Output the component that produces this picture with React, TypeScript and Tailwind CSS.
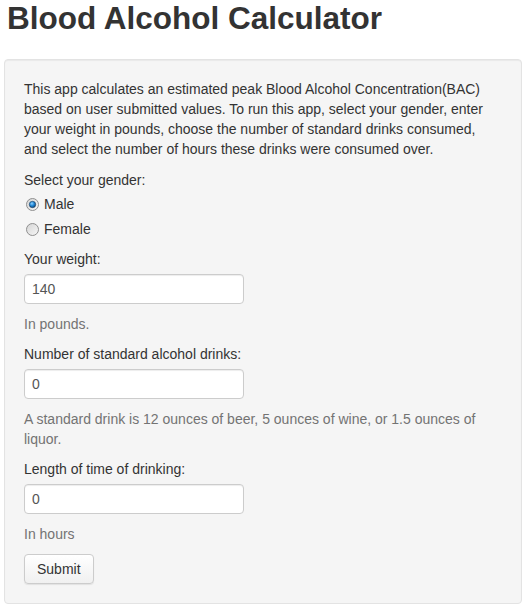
import { useState } from "react";

function Radio({ checked }: { checked: boolean }) {
  return (
    <svg width="13" height="13" viewBox="0 0 13 13" className="shrink-0">
      <defs>
        <linearGradient id={checked ? "rg-on" : "rg-off"} x1="0" y1="0" x2="1" y2="1">
          <stop offset="0" stopColor="#d4d4d4" />
          <stop offset="1" stopColor="#f7f7f7" />
        </linearGradient>
        <radialGradient id="dot" cx="0.4" cy="0.35" r="0.7">
          <stop offset="0" stopColor="#8fd1ff" />
          <stop offset="0.5" stopColor="#1e86d6" />
          <stop offset="1" stopColor="#0b3f73" />
        </radialGradient>
      </defs>
      <circle cx="6.5" cy="6.5" r="6" fill={`url(#${checked ? "rg-on" : "rg-off"})`} stroke="#8f8f8f" strokeWidth="1" />
      {checked && <circle cx="6.5" cy="6.5" r="3.2" fill="url(#dot)" stroke="#1d3c5c" strokeWidth="0.6" />}
    </svg>
  );
}

function NumberInput({ value }: { value: string }) {
  return (
    <input
      type="text"
      defaultValue={value}
      className="mt-[5px] block h-[30px] w-[220px] rounded-[4px] border border-[#cccccc] bg-white px-[7px] text-[14px] text-[#555555] shadow-[inset_0_1px_1px_rgba(0,0,0,0.075)] outline-none"
    />
  );
}

export default function App() {
  const [gender, setGender] = useState("male");

  return (
    <div className="min-h-screen bg-white text-[14px] leading-[20px] text-[#333333] font-['Liberation_Sans',Arial,sans-serif]">
      <div className="px-[4px]">
        <h1 className="pl-[3px] pt-[1px] text-[31.5px] font-bold leading-[34px] text-[#333333]">Blood Alcohol Calculator</h1>

        <div className="mt-[24px] w-[518px] rounded-[4px] border border-[#e3e3e3] bg-[#f5f5f5] p-[19px] shadow-[inset_0_1px_1px_rgba(0,0,0,0.05)]">
          <p className="mb-[11px] whitespace-nowrap">
            This app calculates an estimated peak Blood Alcohol Concentration(BAC)
            <br />
            based on user submitted values. To run this app, select your gender, enter
            <br />
            your weight in pounds, choose the number of standard drinks consumed,
            <br />
            and select the number of hours these drinks were consumed over.
          </p>

          <div>Select your gender:</div>
          <div className="mt-[4px] flex flex-col gap-[5px]">
            {[
              ["male", "Male"],
              ["female", "Female"],
            ].map(([key, label]) => (
              <label key={key} className="flex cursor-pointer items-center gap-[5px] pl-[2px]" onClick={() => setGender(key)}>
                <Radio checked={gender === key} />
                <span>{label}</span>
              </label>
            ))}
          </div>

          <div className="mt-[10px]">Your weight:</div>
          <NumberInput value="140" />
          <div className="mt-[10px] text-[#737373]">In pounds.</div>

          <div className="mt-[10px]">Number of standard alcohol drinks:</div>
          <NumberInput value="0" />
          <div className="mt-[10px] text-[#737373]">
            A standard drink is 12 ounces of beer, 5 ounces of wine, or 1.5 ounces of
            <br />
            liquor.
          </div>

          <div className="mt-[10px]">Length of time of drinking:</div>
          <NumberInput value="0" />
          <div className="mt-[10px] text-[#737373]">In hours</div>

          <button className="mt-[10px] h-[30px] rounded-[4px] border border-[#cccccc] bg-gradient-to-b from-[#ffffff] to-[#f0f0f0] px-[12px] text-[14px] text-[#333333] shadow-[0_1px_1px_rgba(0,0,0,0.08)]">
            Submit
          </button>
        </div>
      </div>
    </div>
  );
}
